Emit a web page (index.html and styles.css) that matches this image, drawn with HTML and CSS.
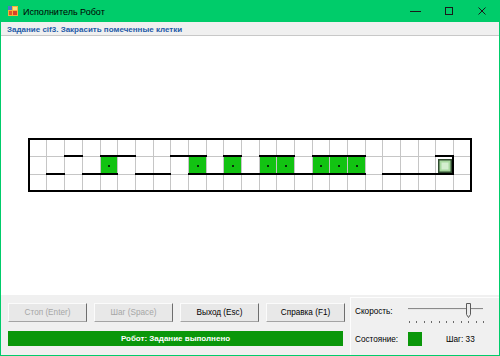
FILE: index.html
```html
<!DOCTYPE html>
<html lang="ru">
<head>
<meta charset="utf-8">
<title>Исполнитель Робот</title>
<link rel="stylesheet" href="styles.css">
</head>
<body>
<div class="window">
  <div class="titlebar">
    <svg class="app-icon" width="10" height="10" viewBox="0 0 10 10">
      <rect x="0" y="0" width="10" height="10" fill="#f2b33d"/>
      <rect x="0" y="0" width="4" height="4" fill="#4a78c8"/>
      <rect x="5" y="1" width="4" height="3" fill="#f7e27a"/>
      <rect x="1" y="5" width="3" height="4" fill="#e0552a"/>
      <rect x="5" y="5" width="4" height="4" fill="#d9422a"/>
    </svg>
    <span class="title">Исполнитель Робот</span>
    <div class="controls">
      <span class="ctl"><svg width="11" height="10" viewBox="0 0 11 10"><rect x="0" y="5" width="11" height="1" fill="#1a1a1a"/></svg></span>
      <span class="ctl"><svg width="8" height="8" viewBox="0 0 8 8"><rect x="0.5" y="0.5" width="7" height="7" fill="none" stroke="#1a1a1a" stroke-width="1"/></svg></span>
      <span class="ctl"><svg width="8" height="8" viewBox="0 0 8 8"><path d="M0.5 0.5 L7.5 7.5 M7.5 0.5 L0.5 7.5" stroke="#1a1a1a" stroke-width="1"/></svg></span>
    </div>
  </div>
  <div class="task">Задание cif3. Закрасить помеченные клетки</div>
  <div class="field">
    <svg class="board" width="444" height="54" viewBox="0 0 444 54">
      <g stroke="#c6c6c6" stroke-width="1" shape-rendering="crispEdges">
        <path d="M18.5 2V52M36.5 2V52M54.5 2V52M72.5 2V52M89.5 2V52M107.5 2V52M125.5 2V52M142.5 2V52M160.5 2V52M178.5 2V52M195.5 2V52M213.5 2V52M231.5 2V52M248.5 2V52M266.5 2V52M284.5 2V52M301.5 2V52M319.5 2V52M337.5 2V52M354.5 2V52M372.5 2V52M390.5 2V52M407.5 2V52M425.5 2V52"/>
        <path d="M2 18.5H442M2 36.5H442"/>
      </g>
      <g fill="#12c312">
        <rect x="73" y="19" width="16" height="17"/>
        <rect x="161" y="19" width="17" height="17"/>
        <rect x="196" y="19" width="17" height="17"/>
        <rect x="232" y="19" width="16" height="17"/>
        <rect x="249" y="19" width="17" height="17"/>
        <rect x="285" y="19" width="16" height="17"/>
        <rect x="302" y="19" width="17" height="17"/>
        <rect x="320" y="19" width="17" height="17"/>
      </g>
      <g fill="#0a2a0a">
        <rect x="80" y="27" width="2" height="2"/>
        <rect x="169" y="27" width="2" height="2"/>
        <rect x="204" y="27" width="2" height="2"/>
        <rect x="239" y="27" width="2" height="2"/>
        <rect x="257" y="27" width="2" height="2"/>
        <rect x="292" y="27" width="2" height="2"/>
        <rect x="310" y="27" width="2" height="2"/>
        <rect x="328" y="27" width="2" height="2"/>
      </g>
      <g fill="#000">
        <rect x="36" y="17" width="19" height="2"/>
        <rect x="72" y="17" width="36" height="2"/>
        <rect x="142" y="17" width="37" height="2"/>
        <rect x="195" y="17" width="19" height="2"/>
        <rect x="231" y="17" width="36" height="2"/>
        <rect x="284" y="17" width="54" height="2"/>
        <rect x="407" y="17" width="19" height="2"/>
        <rect x="18" y="35" width="19" height="2"/>
        <rect x="54" y="35" width="36" height="2"/>
        <rect x="107" y="35" width="36" height="2"/>
        <rect x="160" y="35" width="178" height="2"/>
        <rect x="354" y="35" width="72" height="2"/>
        <rect x="424" y="17" width="2" height="20"/>
      </g>
      <rect x="410" y="21" width="14" height="14" fill="#2e4a2e"/>
      <rect x="411.5" y="22.5" width="11" height="11" fill="#a9d9a0"/>
      <rect x="413.5" y="24.5" width="7" height="7" fill="#d4eecf"/>
      <rect x="1" y="1" width="442" height="52" fill="none" stroke="#000" stroke-width="2"/>
    </svg>
  </div>
  <div class="bottom">
    <div class="left">
      <div class="buttons">
        <button class="btn" disabled>Стоп (Enter)</button>
        <button class="btn" disabled>Шаг (Space)</button>
        <button class="btn">Выход (Esc)</button>
        <button class="btn">Справка (F1)</button>
      </div>
      <div class="status">Робот: Задание выполнено</div>
    </div>
    <div class="right">
      <div class="row r1">
        <span class="lbl">Скорость:</span>
        <svg class="slider" width="80" height="26" viewBox="0 0 80 26">
          <rect x="0" y="10" width="75" height="1" fill="#8a8a8a"/>
          <rect x="0" y="11" width="75" height="1" fill="#e6e6e6"/>
          <path d="M58.5 5.5H62.5V16.5L60.5 19.5L58.5 16.5Z" fill="#ececec" stroke="#5a5a5a" stroke-width="1"/>
          <g fill="#6a6a6a">
            <rect x="1" y="23" width="1" height="2"/>
            <rect x="8" y="23" width="1" height="2"/>
            <rect x="16" y="23" width="1" height="2"/>
            <rect x="23" y="23" width="1" height="2"/>
            <rect x="31" y="23" width="1" height="2"/>
            <rect x="38" y="23" width="1" height="2"/>
            <rect x="45" y="23" width="1" height="2"/>
            <rect x="53" y="23" width="1" height="2"/>
            <rect x="60" y="23" width="1" height="2"/>
            <rect x="68" y="23" width="1" height="2"/>
            <rect x="75" y="23" width="1" height="2"/>
          </g>
        </svg>
      </div>
      <div class="row r2">
        <span class="lbl">Состояние:</span>
        <span class="state"></span>
        <span class="step">Шаг: 33</span>
      </div>
    </div>
  </div>
</div>
</body>
</html>
```
FILE: styles.css
```css
* { box-sizing: border-box; }
html, body { margin: 0; padding: 0; }
body {
  width: 500px;
  height: 356px;
  overflow: hidden;
  background: #fff;
  font-family: "Liberation Sans", Arial, sans-serif;
}
.window {
  width: 500px;
  height: 356px;
  border: 1px solid #00cc6a;
  border-top: 0;
  display: flex;
  flex-direction: column;
}
.titlebar {
  flex: none;
  height: 22px;
  background: #00cc6a;
  display: flex;
  align-items: center;
  padding: 0 1px 0 7px;
}
.app-icon { display: block; margin-right: 5px; }
.title {
  flex: 1;
  font-size: 9px;
  color: #000;
  padding-top: 1px;
}
.controls { display: flex; height: 22px; }
.ctl {
  width: 33px;
  height: 22px;
  display: flex;
  align-items: center;
  justify-content: center;
}
.ctl svg { display: block; }
.task {
  flex: none;
  height: 14px;
  background: #f0f0f0;
  border-bottom: 1px solid #c8c8c8;
  color: #1e5aa8;
  font-size: 8px;
  font-weight: bold;
  line-height: 13px;
  padding: 1px 0 0 6px;
}
.field {
  flex: 1;
  background: #fff;
  display: flex;
  justify-content: center;
  align-items: flex-start;
  padding-top: 102px;
}
.board { display: block; }
.bottom {
  flex: none;
  height: 60px;
  background: #f0f0f0;
  display: flex;
}
.left {
  width: 349px;
  padding: 8px 0 0 7px;
}
.buttons { display: flex; gap: 7px; }
.btn {
  width: 79px;
  height: 19px;
  padding: 0;
  margin: 0;
  background: #e8e8e8;
  border: 1px solid;
  border-color: #fbfbfb #6e6e6e #a4a4a4 #fbfbfb;
  font-family: "Liberation Sans", Arial, sans-serif;
  font-size: 8.2px;
  color: #000;
}
.btn:disabled { color: #a6a6a6; }
.status {
  margin-top: 9px;
  width: 335px;
  height: 15px;
  background: #0a970a;
  color: #fff;
  font-size: 8px;
  font-weight: bold;
  line-height: 15px;
  text-align: center;
}
.right {
  flex: 1;
  margin-top: 2px;
  border-top: 1px solid #fdfdfd;
  border-left: 1px solid #fdfdfd;
  padding-left: 4px;
}
.row { display: flex; align-items: center; }
.r1 { height: 26px; }
.r2 { height: 30px; }
.lbl {
  width: 53px;
  font-size: 8.2px;
  color: #000;
}
.slider { display: block; }
.state {
  width: 14px;
  height: 14px;
  background: #0a970a;
}
.step {
  margin-left: 24px;
  font-size: 8.2px;
  color: #000;
}
```
